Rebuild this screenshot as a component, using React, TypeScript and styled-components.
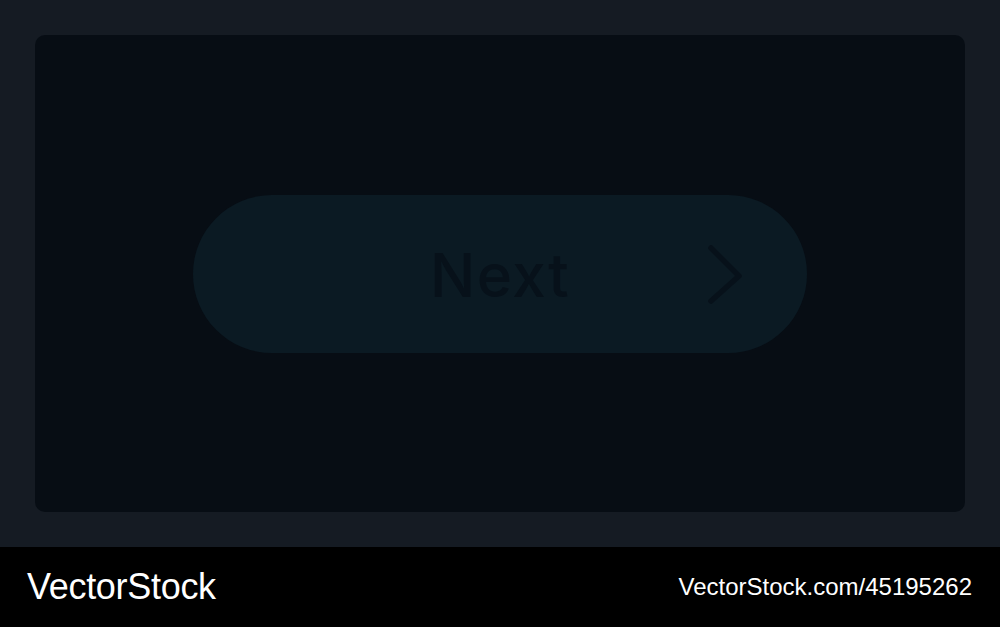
import React from "react";
import styled, { createGlobalStyle } from "styled-components";

const GlobalStyle = createGlobalStyle`
  html, body {
    margin: 0;
    padding: 0;
    background: #151b23;
  }
  * { box-sizing: border-box; }
`;

const Page = styled.div`
  width: 1000px;
  height: 627px;
  display: flex;
  flex-direction: column;
`;

const Stage = styled.div`
  height: 547px;
  padding: 35px;
  background: #151b23;
`;

const Panel = styled.div`
  height: 100%;
  border-radius: 10px;
  background: #070d14;
  display: flex;
  align-items: center;
  justify-content: center;
`;

const NextButton = styled.button`
  position: relative;
  width: 614px;
  height: 158px;
  border: none;
  border-radius: 79px;
  background: #0b1a23;
  display: flex;
  align-items: center;
  justify-content: center;
  cursor: pointer;
  padding: 0;
`;

const Label = styled.span`
  font-family: Inter, "Noto Sans", sans-serif;
  font-size: 60px;
  font-weight: 500;
  color: #07111a;
  letter-spacing: 1.5px;
  margin-top: 2px;
`;

const Chevron = styled.svg`
  position: absolute;
  right: 62px;
  top: 50%;
  transform: translateY(-50%);
`;

const Footer = styled.footer`
  height: 80px;
  background: #000;
  display: flex;
  align-items: center;
  justify-content: space-between;
  padding: 0 28px 0 27px;
  color: #fff;
  font-family: "Liberation Sans", Arial, sans-serif;
`;

const Brand = styled.span`
  font-size: 36px;
  letter-spacing: -0.3px;
`;

const Link = styled.span`
  font-size: 24px;
  letter-spacing: 0;
`;

export default function App() {
  return (
    <Page>
      <GlobalStyle />
      <Stage>
        <Panel>
          <NextButton>
            <Label>Next</Label>
            <Chevron width="40" height="62" viewBox="0 0 40 62">
              <path
                d="M6 5 L34 33 L6 58"
                fill="none"
                stroke="#07111a"
                strokeWidth="5.5"
                strokeLinecap="round"
                strokeLinejoin="round"
              />
            </Chevron>
          </NextButton>
        </Panel>
      </Stage>
      <Footer>
        <Brand>VectorStock</Brand>
        <Link>VectorStock.com/45195262</Link>
      </Footer>
    </Page>
  );
}
